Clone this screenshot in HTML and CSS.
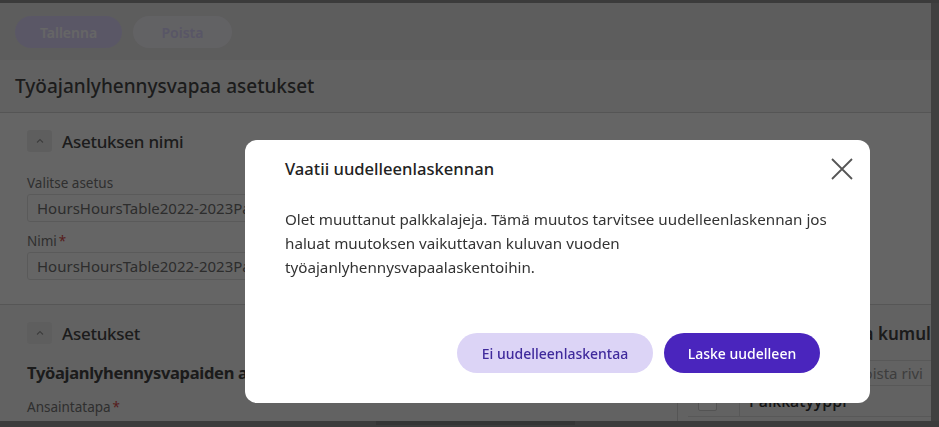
FILE: index.html
```html
<!DOCTYPE html>
<html lang="fi">
<head>
<meta charset="utf-8">
<title>Työajanlyhennysvapaa asetukset</title>
<link rel="stylesheet" href="styles.css">
</head>
<body>
<div class="app">
  <div class="topbar"></div>
  <div class="main">
    <div class="content">
      <div class="toolbar">
        <button class="btn-save">Tallenna</button>
        <button class="btn-delete">Poista</button>
      </div>
      <div class="page-header">Työajanlyhennysvapaa asetukset</div>
      <div class="section1">
        <div class="sec-head">
          <span class="chev"><svg viewBox="0 0 12 12" width="12" height="12"><path d="M3 7.5 L6 4.5 L9 7.5" fill="none" stroke="#9a9a9a" stroke-width="1.2"/></svg></span>
          <span class="sec-title">Asetuksen nimi</span>
        </div>
        <div class="label first">Valitse asetus</div>
        <div class="input">HoursHoursTable2022-2023PayRates</div>
        <div class="label">Nimi<span class="req">*</span></div>
        <div class="input">HoursHoursTable2022-2023PayRates</div>
      </div>
      <div class="section2">
        <div class="col-left">
          <div class="sec-head">
            <span class="chev"><svg viewBox="0 0 12 12" width="12" height="12"><path d="M3 7.5 L6 4.5 L9 7.5" fill="none" stroke="#9a9a9a" stroke-width="1.2"/></svg></span>
            <span class="sec-title">Asetukset</span>
          </div>
          <div class="subtitle">Työajanlyhennysvapaiden ansainta</div>
          <div class="label small">Ansaintatapa<span class="req">*</span></div>
        </div>
        <div class="col-right">
          <div class="right-title">Palkkalajit, joita kumuloidaan</div>
          <div class="grid-tools"><span class="tool">Lisää rivi</span><span class="tool">Poista rivi</span></div>
          <div class="grid-head">
            <span class="cb-cell"><span class="cb"></span></span>
            <span class="col-name">Palkkatyyppi</span>
          </div>
        </div>
      </div>
    </div>
    <div class="vscroll"></div>
  </div>
  <div class="hscroll"><div class="thumb"></div></div>
</div>

<div class="backdrop"></div>
<div class="modal" role="dialog">
  <div class="modal-head">
    <h2 class="modal-title">Vaatii uudelleenlaskennan</h2>
    <button class="close" aria-label="Sulje"><svg viewBox="0 0 22 22" width="22" height="22"><path d="M1 1 L21 21 M21 1 L1 21" stroke="#555" stroke-width="1.8" fill="none"/></svg></button>
  </div>
  <p class="modal-body">Olet muuttanut palkkalajeja. Tämä muutos tarvitsee uudelleenlaskennan jos haluat muutoksen vaikuttavan kuluvan vuoden työajanlyhennysvapaalaskentoihin.</p>
  <div class="modal-foot">
    <button class="btn-secondary">Ei uudelleenlaskentaa</button>
    <button class="btn-primary">Laske uudelleen</button>
  </div>
</div>
</body>
</html>
```
FILE: styles.css
```css
* { box-sizing: border-box; }
html, body { margin: 0; padding: 0; }
body {
  width: 939px;
  height: 427px;
  overflow: hidden;
  font-family: "Noto Sans", "Open Sans", sans-serif;
  color: #4a4a4a;
  background: #fff;
}
button { font-family: inherit; border: 0; cursor: pointer; white-space: nowrap; }

.app { display: flex; flex-direction: column; height: 427px; }
.topbar { height: 3px; background: #959595; flex: none; }
.main { flex: 1; display: flex; min-height: 0; }
.content { flex: 1; display: flex; flex-direction: column; overflow: hidden; background: #fdfdfd; }
.vscroll { width: 8px; background: #a0a0a0; flex: none; }
.hscroll { height: 6px; background: #979797; padding-left: 376px; flex: none; }
.hscroll .thumb { width: 199px; height: 4px; background: #848484; }

.toolbar {
  height: 57px; flex: none;
  background: #e8e8e8;
  display: flex; gap: 11px;
  padding: 13px 15px 0;
}
.btn-save, .btn-delete {
  height: 32px; border-radius: 16px;
  font-size: 14px; font-weight: 600; padding: 0;
}
.btn-save { width: 107px; background: #e2daff; color: #ffffff; }
.btn-delete { width: 99px; background: #f6f4fa; color: #ddd6ff; }

.page-header {
  height: 53px; flex: none;
  background: #f3f3f3;
  border-bottom: 1px solid #d4d4d4;
  padding-left: 15px;
  display: flex; align-items: center;
  font-size: 19px; font-weight: 500; color: #484848;
  white-space: nowrap;
}

.section1 {
  height: 192px; flex: none;
  padding: 17px 0 0 27px;
  border-bottom: 1px solid #d6d6d6;
}
.sec-head { display: flex; align-items: center; gap: 10px; height: 22px; }
.chev {
  width: 25px; height: 22px; border-radius: 3px;
  background: #ececec;
  display: flex; align-items: center; justify-content: center;
}
.sec-title { font-size: 17px; letter-spacing: -0.25px; font-weight: 500; color: #484848; white-space: nowrap; }
.label {
  font-size: 13.5px; line-height: 18px; color: #757575;
  margin-top: 10px; margin-bottom: 2px;
}
.label.first { margin-top: 22px; }
.req { color: #d84a4a; margin-left: 2px; }
.input {
  width: 430px; height: 28px;
  border: 1px solid #e2e2e2; border-radius: 3px;
  padding-left: 9px;
  font-size: 15px; line-height: 26px; color: #707070;
  white-space: nowrap; overflow: hidden;
}

.section2 { flex: 1; display: flex; background: #f4f4f4; min-height: 0; }
.col-left { width: 677px; flex: none; padding: 17px 0 0 27px; }
.subtitle { font-size: 16.5px; letter-spacing: -0.3px; font-weight: 700; line-height: 22px; margin-top: 18px; color: #444; white-space: nowrap; }
.label.small { margin-top: 14px; }
.col-right { flex: 1; border-left: 1px solid #d4d4d4; padding-top: 15px; overflow: hidden; min-width: 0; }
.right-title {
  font-size: 17px; font-weight: 600; color: #444;
  padding-left: 63px; line-height: 28px; height: 40px;
  white-space: nowrap;
}
.grid-tools {
  height: 26px;
  border-top: 1px solid #dcdcdc; border-bottom: 1px solid #dcdcdc;
  display: flex; justify-content: flex-end; gap: 22px;
  padding-right: 8px; margin-left: 10px;
  font-size: 15px; line-height: 24px; color: #9a9a9a;
}
.grid-head {
  height: 31px; margin-left: 10px;
  display: flex; align-items: center;
  border-bottom: 1px solid #dcdcdc;
}
.cb-cell { width: 52px; height: 100%; display: flex; align-items: center; padding-left: 10px; border-right: 1px solid #dcdcdc; }
.cb { width: 19px; height: 19px; border: 1px solid #cfcfcf; border-radius: 2px; background: #fff; }
.col-name { padding-left: 9px; font-size: 16px; font-weight: 500; color: #333; }

.backdrop { position: fixed; inset: 0; background: rgba(0, 0, 0, 0.6); }

.modal {
  position: fixed; left: 245px; top: 140px;
  width: 625px; height: 263px;
  background: #fff; border-radius: 12px;
  display: flex; flex-direction: column;
}
.modal-head {
  display: flex; justify-content: space-between; align-items: center;
  padding: 17px 17px 0 40px;
}
.modal-title { margin: 0; font-size: 16.6px; font-weight: 500; line-height: 24px; color: #222; }
.close { background: none; padding: 0; width: 22px; height: 22px; display: block; }
.close svg { display: block; }
.modal-body {
  margin: 26px 0 0; padding: 0 40px;
  font-size: 15.2px; line-height: 24px; color: #333;
}
.modal-foot {
  margin-top: auto;
  display: flex; justify-content: flex-end; gap: 11px;
  padding: 0 50px 30px;
}
.btn-secondary, .btn-primary {
  height: 40px; border-radius: 20px;
  font-size: 14px; font-weight: 500;
  padding: 0;
}
.btn-secondary { width: 196px; background: #dcd4f6; color: #3f2a9c; }
.btn-primary { width: 156px; background: #4a25bd; color: #fff; }
```
